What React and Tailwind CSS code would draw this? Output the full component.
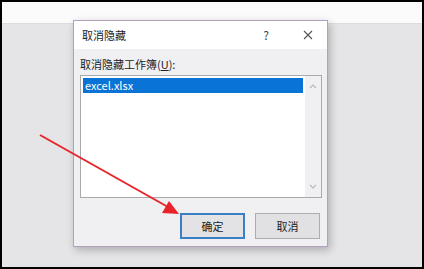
import React from "react";

const font = { fontFamily: '"Noto Sans CJK SC", "Noto Sans", sans-serif' };

function Caret({ down }) {
  return (
    <svg width="8" height="5" viewBox="0 0 8 5" className="text-[#b8b8b8]">
      <path d={down ? "M1 1 L4 4 L7 1" : "M1 4 L4 1 L7 4"} fill="none" stroke="currentColor" strokeWidth="1.2" />
    </svg>
  );
}

export default function App() {
  return (
    <div className="w-[424px] h-[269px] bg-black p-[2px] overflow-hidden" style={font}>
      <div className="relative w-full h-full flex flex-col">
        <div className="h-[22px] bg-[#fbfbfb] border-b border-[#dcdcdc]" />
        <div className="flex-1 bg-[#e5e4e7]" />

        {/* dialog */}
        <div className="absolute left-[71px] top-[18px] w-[255px] h-[227px] border border-[#b59fbf] bg-[#f0eff2] shadow-[2px_3px_8px_rgba(0,0,0,0.25)] flex flex-col">
          <div className="h-[28px] bg-white flex items-center pl-[8px] pr-[14px] text-[11px] text-[#222]">
            <span className="flex-1">取消隐藏</span>
            <span className="mr-[34px] text-[12px] text-[#444]">?</span>
            <svg width="10" height="10" viewBox="0 0 10 10">
              <path d="M1 1 L9 9 M9 1 L1 9" stroke="#555" strokeWidth="1.1" />
            </svg>
          </div>
          <div className="flex-1 flex flex-col pl-[6px] pr-[6px]">
            <div className="mt-[8px] h-[14px] text-[11px] leading-[14px] text-[#222]">
              取消隐藏工作簿(<span className="underline">U</span>):
            </div>
            <div className="mt-[4px] h-[123px] w-[242px] border border-[#a9a9ab] bg-white flex">
              <div className="flex-1 p-[2px]">
                <div className="h-[15px] bg-[#0a74d6] text-white text-[11px] leading-[15px] pl-[2px]">excel.xlsx</div>
              </div>
              <div className="w-[16px] bg-[#f0eff2] flex flex-col items-center justify-between py-[8px]">
                <Caret />
                <Caret down />
              </div>
            </div>
            <div className="mt-[15px] flex justify-end gap-[10px] pr-[1px]">
              <div className="w-[65px] h-[26px] border-2 border-[#3a7fc4] bg-[#e3e3e5] flex items-center justify-center text-[11px] text-[#222]">确定</div>
              <div className="w-[65px] h-[26px] border border-[#adadad] bg-[#e1e1e3] flex items-center justify-center text-[11px] text-[#222]">取消</div>
            </div>
          </div>
        </div>

        {/* arrow */}
        <svg className="absolute left-[-2px] top-[-2px]" width="424" height="269" viewBox="0 0 424 269">
          <line x1="40" y1="135" x2="168" y2="207" stroke="#e8242a" strokeWidth="2" />
          <polygon points="179,214 162,213 169,201" fill="#e8242a" />
        </svg>
      </div>
    </div>
  );
}
